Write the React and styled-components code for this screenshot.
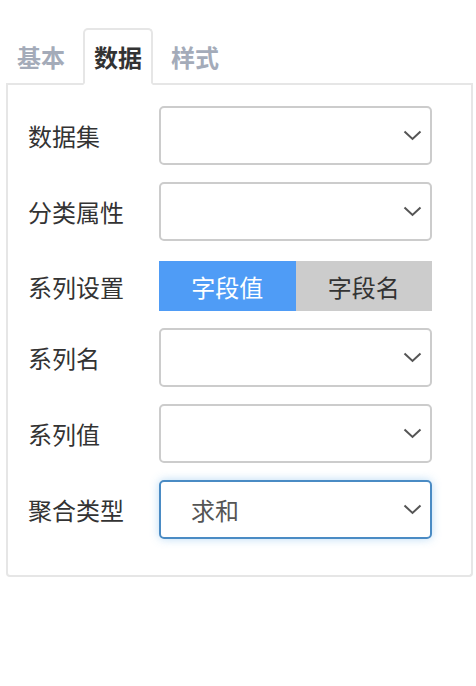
import React from "react";
import styled, { createGlobalStyle, css } from "styled-components";

const GlobalStyle = createGlobalStyle`
  html, body {
    margin: 0;
    padding: 0;
    background: #fff;
    font-family: "Noto Sans CJK SC", "Noto Sans", sans-serif;
  }
`

const Wrapper = styled.div`
  margin: 28px 3px 0 6px;
`

const TabBar = styled.div`
  display: flex;
  border-bottom: 2px solid #e6e6e6;
`

const Tab = styled.div`
  height: 53px;
  padding: 0 9px;
  margin-right: 7px;
  margin-bottom: -2px;
  display: flex;
  align-items: center;
  font-size: 24px;
  font-weight: 700;
  color: #a4abb9;
  border: 2px solid transparent;
  border-radius: 5px 5px 0 0;
  ${({ $active }) => $active && css`
    color: #333;
    background: #fff;
    border-color: #e6e6e6;
    border-bottom-color: #fff;
  `}
`

const Panel = styled.div`
  border: 2px solid #e6e6e6;
  border-top: none;
  border-radius: 0 0 4px 4px;
  padding: 21px 0 19px 20px;
`

const Row = styled.div`
  display: flex;
  align-items: center;
  margin-bottom: 17px;
  padding-top: ${({ $pad }) => $pad || 0}px;
`

const Label = styled.div`
  width: 131px;
  font-size: 24px;
  color: #333;
`

const Select = styled.div`
  box-sizing: border-box;
  width: 273px;
  height: 59px;
  border: 2px solid #cccccc;
  border-radius: 5px;
  display: flex;
  align-items: center;
  justify-content: space-between;
  padding: 0 8px 0 30px;
  font-size: 24px;
  color: #555;
  ${({ $focused }) => $focused && css`
    border-color: #4a8bc4;
    box-shadow: 0 0 10px rgba(102, 175, 233, 0.45);
  `}
`

const Chevron = () => (
  <svg width="19" height="11" viewBox="0 0 19 11" fill="none">
    <polyline points="1.5,1.5 9.5,9 17.5,1.5" stroke="#555" strokeWidth="2" />
  </svg>
)

const ButtonGroup = styled.div`
  display: flex;
  width: 273px;
  height: 50px;
`

const SegButton = styled.div`
  flex: 1;
  display: flex;
  align-items: center;
  justify-content: center;
  font-size: 24px;
  background: ${({ $active }) => ($active ? "#4f9cf6" : "#cccccc")};
  color: ${({ $active }) => ($active ? "#fff" : "#333")};
`

const SelectRow = ({ label, value, focused }) => (
  <Row>
    <Label>{label}</Label>
    <Select $focused={focused}>
      <span>{value}</span>
      <Chevron />
    </Select>
  </Row>
)

export default function App() {
  return (
    <Wrapper>
      <GlobalStyle />
      <TabBar>
        <Tab>基本</Tab>
        <Tab $active>数据</Tab>
        <Tab>样式</Tab>
      </TabBar>
      <Panel>
        <SelectRow label="数据集" />
        <SelectRow label="分类属性" />
        <Row $pad={3}>
          <Label>系列设置</Label>
          <ButtonGroup>
            <SegButton $active>字段值</SegButton>
            <SegButton>字段名</SegButton>
          </ButtonGroup>
        </Row>
        <SelectRow label="系列名" />
        <SelectRow label="系列值" />
        <SelectRow label="聚合类型" value="求和" focused />
      </Panel>
    </Wrapper>
  );
}
